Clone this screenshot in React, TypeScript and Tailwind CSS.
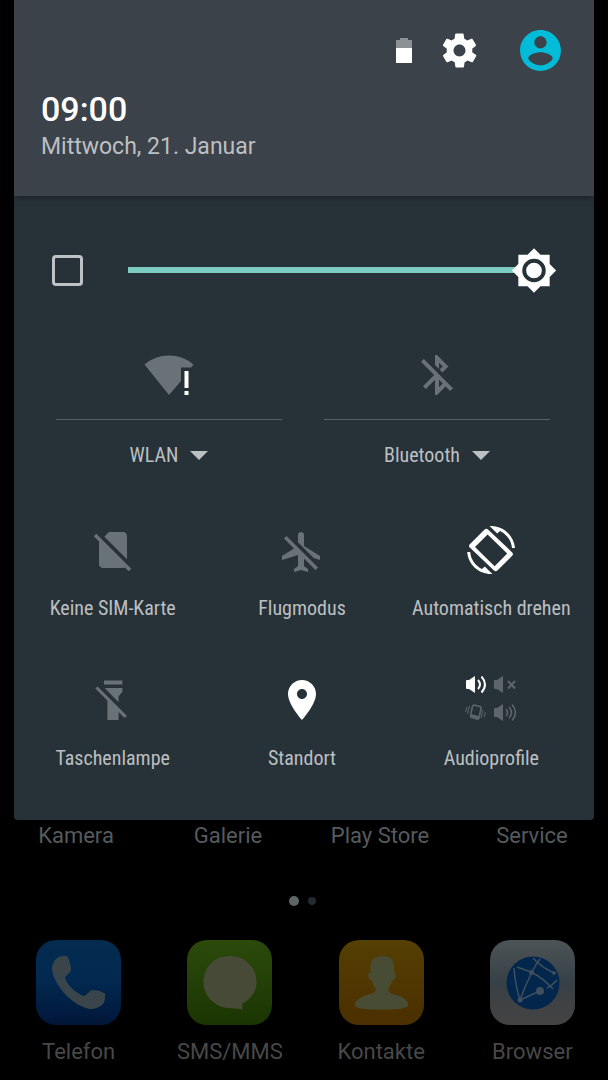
import React, { useState } from "react";

type IconProps = { className?: string };

const MaterialIcon = ({
  d,
  viewBox = "0 0 24 24",
  className = "h-12 w-12",
}: {
  d: string;
  viewBox?: string;
  className?: string;
}) => (
  <svg viewBox={viewBox} fill="currentColor" className={className} aria-hidden>
    <path d={d} />
  </svg>
);

const paths = {
  settings:
    "M19.4,13c0-0.3,0.1-0.6,0.1-1s0-0.7-0.1-1l2.1-1.7c0.2-0.2,0.2-0.4,0.1-0.6l-2-3.5C19.5,5.1,19.3,5,19,5.1l-2.5,1c-0.5-0.4-1.1-0.7-1.7-1l-0.4-2.6C14.5,2.2,14.2,2,14,2h-4C9.8,2,9.5,2.2,9.5,2.4L9.1,5.1C8.5,5.3,8,5.7,7.4,6.1L5,5.1C4.7,5,4.5,5.1,4.3,5.3l-2,3.5C2.2,8.9,2.3,9.2,2.5,9.4L4.6,11c0,0.3-0.1,0.6-0.1,1s0,0.7,0.1,1l-2.1,1.7c-0.2,0.2-0.2,0.4-0.1,0.6l2,3.5C4.5,18.9,4.7,19,5,18.9l2.5-1c0.5,0.4,1.1,0.7,1.7,1l0.4,2.6c0,0.2,0.2,0.4,0.5,0.4h4c0.2,0,0.5-0.2,0.5-0.4l0.4-2.6c0.6-0.3,1.2-0.6,1.7-1l2.5,1c0.2,0.1,0.5,0,0.6-0.2l2-3.5c0.1-0.2,0.1-0.5-0.1-0.6L19.4,13z M12,15.5c-1.9,0-3.5-1.6-3.5-3.5s1.6-3.5,3.5-3.5s3.5,1.6,3.5,3.5S13.9,15.5,12,15.5z",
  account:
    "M12 2C6.48 2 2 6.48 2 12s4.48 10 10 10 10-4.48 10-10S17.52 2 12 2zm0 3c1.66 0 3 1.34 3 3s-1.34 3-3 3-3-1.34-3-3 1.34-3 3-3zm0 14.2c-2.5 0-4.71-1.28-6-3.22.03-1.99 4-3.08 6-3.08 1.99 0 5.97 1.09 6 3.08-1.29 1.94-3.5 3.22-6 3.22z",
  bluetoothOff:
    "M13 5.83l1.88 1.88-1.6 1.6 1.41 1.41 3.02-3.02L12 2h-1v5.03l2 2v-3.2zM5.41 4L4 5.41 10.59 12 5 17.59 6.41 19 11 14.41V22h1l4.29-4.29 2.3 2.29L20 18.59 5.41 4zM13 18.17v-3.76l1.88 1.88L13 18.17z",
  noSim:
    "M18.99 5c0-1.1-.89-2-1.99-2h-7L7.66 5.34 19 16.68 18.99 5zM3.65 3.88L2.38 5.15 5 7.77V19c0 1.1.9 2 2 2h10.01c.35 0 .67-.1.96-.26l1.88 1.88 1.27-1.27L3.65 3.88z",
  airplaneOff:
    "M13 9V3.5c0-.83-.67-1.5-1.5-1.5S10 2.67 10 3.5v3.68l7.83 7.83L21 16v-2l-8-5zM3 5.27l4.99 4.99L2 14v2l8-2.5V19l-2 1.5V22l3.5-1 3.5 1v-1.5L13 19v-3.73L18.73 21 20 19.73 4.27 4 3 5.27z",
  flashlightOff:
    "M7.5 2.2H16.7V4.2H7.5zM7.8 6H16.7V7.8L14.8 10.2V13.1zM4.3 5.2L18.9 19.9 17.8 21 14.8 18V22H9.2V12.2L3.2 6.3z",
  location:
    "M12 2C8.13 2 5 5.13 5 9c0 5.25 7 13 7 13s7-7.75 7-13c0-3.87-3.13-7-7-7zm0 9.5c-1.38 0-2.5-1.12-2.5-2.5s1.12-2.5 2.5-2.5 2.5 1.12 2.5 2.5-1.12 2.5-2.5 2.5z",
  rotate:
    "M16.5 2.5c3.3 1.6 5.6 4.7 6 8.500H24C23.4 4.8 18.3 0 12 0l-.7 0 3.8 3.8 1.4-1.3zM10.500 1.700c-.500-.500-1.200-.500-1.700 0L1.400 9.100c-.500.500-.500 1.200 0 1.700L13.500 22.300c.500.500 1.200.500 1.700 0l7.400-7.400c.500-.500.500-1.200 0-1.700zM10.300 4.200L20.100 13.800 13.800 20.100 4 10.500zM7.500 21.500C4.200 19.900 1.900 16.800 1.600 13H.1C.6 19.2 5.700 24 12 24l.7 0-3.800-3.800-1.400 1.300z",
};

const BrightnessIcon = ({ className }: IconProps) => (
  <svg viewBox="0 0 24 24" className={className} aria-hidden>
    <path
      d="M20 8.690V4h-4.690L12 .690 8.690 4H4v4.690L.690 12 4 15.310V20h4.690L12 23.310 15.310 20H20v-4.690L23.310 12 20 8.690z"
      fill="#fff"
    />
    <circle cx="12" cy="12" r="5" fill="#fff" stroke="#273238" strokeWidth="2" />
  </svg>
);

const WifiIcon = ({ className }: IconProps) => (
  <svg viewBox="0 0 50 48" className={className} aria-hidden>
    <path
      d="M.5 13.500Q11 4.500 25 4.500T49.500 13.500L47 16.500H37V30L25 44z"
      fill="#697276"
    />
    <path d="M40.500 20h4v17h-4zM40.500 40h4v4h-4z" fill="#fff" />
  </svg>
);

const BatteryIcon = ({ className }: IconProps) => (
  <svg viewBox="0 0 16 25" className={className} aria-hidden>
    <path d="M4 0h8v2h4v8H0V2h4z" fill="#8c9194" />
    <path d="M0 10h16v15H0z" fill="#fff" />
  </svg>
);

const AudioIcon = ({ className }: IconProps) => (
  <svg viewBox="0 4 52 48" fill="none" className={className} aria-hidden>
    <g stroke="#fff" strokeWidth="2">
      <path d="M1 9q0-1 1-1h2l6-4v17l-6-4H2q-1 0-1-1z" fill="#fff" stroke="none" />
      <path d="M13 8q4 4.500 0 9M16.500 4.500q7 8 0 16" />
    </g>
    <g stroke="#5c666b" strokeWidth="1.500">
      <path
        d="M29 9q0-1 1-1h2l6-4v17l-6-4h-2q-1 0-1-1z"
        fill="#5c666b"
        stroke="none"
      />
      <path d="M43 9l7 7.500M50 9l-7 7.500" strokeWidth="2" />
      <path
        d="M29 37q0-1 1-1h2l6-4v17l-6-4h-2q-1 0-1-1z"
        fill="#5c666b"
        stroke="none"
      />
      <path d="M41 37q3 3.500 0 7M44 35q5 5.500 0 11M47 32.500q7 8 0 16" />
      <path d="M9 33l6 1.500q1.500.500 1 2L14 46q-.5 1.500-2 1L6.500 45.500q-1.500-.5-1-2L7.500 34.500q.3-1.500 1.500-1.500z" />
      <path d="M6 43.500l8 2" strokeWidth="2.500" />
      <path d="M4.500 34l-2 8M2 35l-1.500 5M18 38l-2 8M20.500 40l-1.500 5" strokeWidth="1" />
    </g>
  </svg>
);

const PhoneIcon = ({ className }: IconProps) => (
  <svg viewBox="0 0 85 85" className={className} aria-hidden>
    <defs>
      <linearGradient id="phoneBg" x2="0" y2="1">
        <stop offset="0" stopColor="#032c4f" />
        <stop offset=".5" stopColor="#02284f" />
        <stop offset="1" stopColor="#011638" />
      </linearGradient>
    </defs>
    <rect width="85" height="85" rx="20" fill="url(#phoneBg)" />
    <path
      d="M24 16.500c3-1 6-.5 7.500 0 2 4 3.500 9 3.500 13-.5 3-4.500 5.500-6 8.500 2 7 12 16 19 18 3-1 5-5 8-6 4 0 9 1 13 3.500.500 3 0 8-2 10.500-4 4-9 5.500-14 5-17-4-35-23-37-40 0-5 3-11 8-12.500z"
      fill="#39444b"
    />
  </svg>
);

const MessageIcon = ({ className }: IconProps) => (
  <svg viewBox="0 0 85 85" className={className} aria-hidden>
    <defs>
      <linearGradient id="messageBg" x2="0" y2="1">
        <stop offset="0" stopColor="#2c4a0c" />
        <stop offset="1" stopColor="#1b3502" />
      </linearGradient>
    </defs>
    <rect width="85" height="85" rx="20" fill="url(#messageBg)" />
    <path
      d="M43 16c15 0 26.500 11.500 26.500 26 0 9-5 17-14.500 22l.500 5.500c-4-1-9-1-14-1.500-14-1-25-12-25-26 0-15 11-26 26.500-26z"
      fill="#474a37"
    />
  </svg>
);

const ContactIcon = ({ className }: IconProps) => (
  <svg viewBox="0 0 85 85" className={className} aria-hidden>
    <defs>
      <linearGradient id="contactBg" x2="0" y2="1">
        <stop offset="0" stopColor="#553f02" />
        <stop offset="1" stopColor="#4b2f00" />
      </linearGradient>
    </defs>
    <rect width="85" height="85" rx="20" fill="url(#contactBg)" />
    <path
      d="M43.500 16c8 0 12 4 11.500 12v5l2 1c0 4-2 6-4 7-1 4-3 6-4 8 1 4 4 5 8 6 8 2 13 6 12 11-2 3-14 3.500-26 3.500s-25-.5-27-3.500c-.5-5 5-9 12-11 4-1 8-2 9-6-2-2-3-4-4-8-2-1-4-3-4-7l2.500-1v-5c-.5-8 4-12 12-12z"
      fill="#484c35"
    />
  </svg>
);

const BrowserIcon = ({ className }: IconProps) => (
  <svg viewBox="0 0 85 85" className={className} aria-hidden>
    <defs>
      <linearGradient id="browserBg" x2="0" y2="1">
        <stop offset="0" stopColor="#4d5456" />
        <stop offset=".5" stopColor="#364046" />
        <stop offset=".7" stopColor="#3e4144" />
        <stop offset="1" stopColor="#434343" />
      </linearGradient>
    </defs>
    <rect width="85" height="85" rx="20" fill="url(#browserBg)" />
    <circle cx="43" cy="43" r="26.500" fill="#03264c" />
    <g stroke="#3f4f5c" strokeWidth="1.500" fill="none">
      <path d="M27 27q8 3 14 5 12 6 22 17M24 28q1 16 6 32 5-14 12-28 4-8 8-13M43 18q8 9 21 15M57 48q6-3 10-8M30 60l20-9" />
    </g>
    <g fill="#3f4f5c">
      <circle cx="50" cy="51" r="4" />
      <circle cx="41.500" cy="32.500" r="2.500" />
      <circle cx="64" cy="33" r="2" />
      <circle cx="30" cy="60" r="2.500" />
    </g>
  </svg>
);

const toggles = [
  {
    label: "WLAN",
    icon: <WifiIcon className="h-12 w-[50px]" />,
  },
  {
    label: "Bluetooth",
    icon: (
      <MaterialIcon d={paths.bluetoothOff} className="h-12 w-12 text-[#697276]" />
    ),
  },
];

const tiles = [
  {
    label: "Keine SIM-Karte",
    icon: <MaterialIcon d={paths.noSim} className="h-12 w-12 text-[#697276]" />,
  },
  {
    label: "Flugmodus",
    icon: (
      <MaterialIcon
        d={paths.airplaneOff}
        viewBox="0 -1 24 24"
        className="h-12 w-12 text-[#697276]"
      />
    ),
  },
  {
    label: "Automatisch drehen",
    icon: <MaterialIcon d={paths.rotate} className="h-12 w-12 text-white" />,
  },
  {
    label: "Taschenlampe",
    icon: (
      <MaterialIcon d={paths.flashlightOff} className="h-12 w-12 text-[#697276]" />
    ),
  },
  {
    label: "Standort",
    icon: <MaterialIcon d={paths.location} className="h-12 w-12 text-white" />,
  },
  {
    label: "Audioprofile",
    icon: <AudioIcon className="h-12 w-[52px]" />,
  },
];

const dock = [
  { label: "Telefon", Icon: PhoneIcon },
  { label: "SMS/MMS", Icon: MessageIcon },
  { label: "Kontakte", Icon: ContactIcon },
  { label: "Browser", Icon: BrowserIcon },
];

const Header = () => (
  <header className="relative bg-[#3b4249] pb-[31px] pl-[27px] pr-[29px] pt-[26px] shadow-[0_1px_8px_rgba(0,0,0,0.4)]">
    <div className="flex items-center justify-end">
      <BatteryIcon className="mr-[27px] h-[25px] w-4" />
      <button type="button" aria-label="Einstellungen" className="mr-9 text-white">
        <MaterialIcon d={paths.settings} className="h-[41px] w-[41px]" />
      </button>
      <button type="button" aria-label="Benutzer" className="text-[#00bcd8]">
        <MaterialIcon d={paths.account} className="h-[49px] w-[49px]" />
      </button>
    </div>
    <p className="mt-[14px] text-[34px] font-medium leading-10 text-white">09:00</p>
    <p className="text-[23px] leading-9 text-[#bcbfc1]">Mittwoch, 21. Januar</p>
  </header>
);

const Brightness = () => {
  const [level, setLevel] = useState(100);
  return (
    <div className="flex items-center pl-[38px] pr-[60px]">
      <input
        type="checkbox"
        aria-label="Automatische Helligkeit"
        className="h-[31px] w-[31px] appearance-none rounded border-3 border-[#bfc2c4] checked:bg-[#80cbc4]"
      />
      <div className="relative ml-[45px] flex h-12 flex-1 items-center">
        <div className="h-[6px] w-full bg-[#4d5a60]">
          <div className="h-full bg-[#7cccc3]" style={{ width: `${level}%` }} />
        </div>
        <div className="absolute -translate-x-1/2" style={{ left: `${level}%` }}>
          <BrightnessIcon className="h-[47px] w-[47px]" />
        </div>
        <input
          type="range"
          aria-label="Helligkeit"
          value={level}
          onChange={(e) => setLevel(Number(e.target.value))}
          className="absolute inset-0 w-full cursor-pointer opacity-0"
        />
      </div>
    </div>
  );
};

export default function App() {
  return (
    <main className="min-h-screen bg-black font-[Roboto,sans-serif]">
      <section className="mx-[14px] overflow-hidden rounded-b bg-[#273238] pb-[46px]">
        <Header />
        <div className="mt-[50px]">
          <Brightness />
        </div>

        <div className="mt-[57px] grid grid-cols-2 pl-[21px] pr-[23px]">
          {toggles.map((item) => (
            <div key={item.label} className="px-[21px]">
              <button
                type="button"
                aria-label={item.label}
                className="flex w-full justify-center pb-5"
              >
                {item.icon}
              </button>
              <hr className="border-[#566065]" />
              <button
                type="button"
                className="mt-[19px] flex w-full items-center justify-center gap-3 font-['Roboto_Condensed',Roboto,sans-serif] text-xl leading-8 text-[#bcbfc1]"
              >
                {item.label}
                <svg viewBox="0 0 18 9" className="h-[9px] w-[18px]" aria-hidden>
                  <path d="M0 0h18l-9 9z" fill="currentColor" />
                </svg>
              </button>
            </div>
          ))}
        </div>

        <div className="mt-[55px] grid grid-cols-3 gap-y-[52px] pl-1 pr-2">
          {tiles.map((item) => (
            <button
              key={item.label}
              type="button"
              className="flex flex-col items-center gap-[18px] whitespace-nowrap font-['Roboto_Condensed',Roboto,sans-serif] text-xl leading-8 text-[#bcbfc1]"
            >
              {item.icon}
              {item.label}
            </button>
          ))}
        </div>
      </section>

      <div className="grid grid-cols-4 text-center text-[22px] leading-8 text-[#555b5d]">
        <span>Kamera</span>
        <span>Galerie</span>
        <span>Play Store</span>
        <span>Service</span>
      </div>

      <div className="mt-11 flex items-center justify-center gap-[9px] pr-[3px]">
        <span className="h-[10px] w-[10px] rounded-full bg-[#5f6669]" />
        <span className="h-2 w-2 rounded-full bg-[#222c30]" />
      </div>

      <nav className="mt-[34px] grid grid-cols-4 pl-[3px]">
        {dock.map(({ label, Icon }) => (
          <a
            key={label}
            href="#"
            className="flex flex-col items-center gap-[11px] text-[22px] leading-8 text-[#484848]"
          >
            <Icon className="h-[85px] w-[85px]" />
            {label}
          </a>
        ))}
      </nav>
    </main>
  );
}
